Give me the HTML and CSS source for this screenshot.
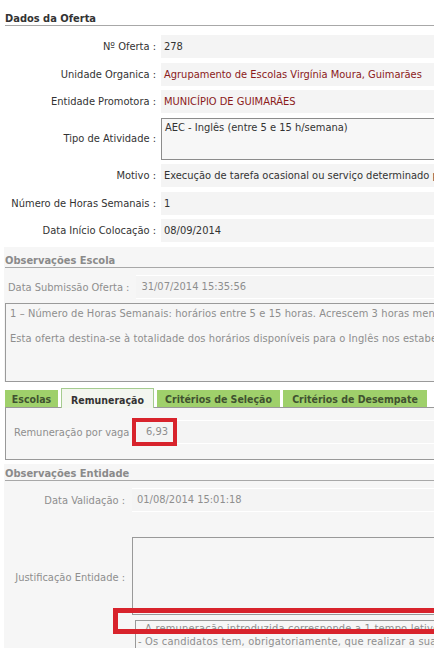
FILE: index.html
```html
<!DOCTYPE html>
<html lang="pt">
<head>
    <meta charset="UTF-8">
    <meta name="viewport" content="width=device-width, initial-scale=1.0">
    <link rel="stylesheet" href="styles.css">
    <title>Dados da Oferta</title>
</head>
<body>
    <div class="page">
        <h2 class="section-title">Dados da Oferta</h2>

        <div class="form-row">
            <label>Nº Oferta :</label>
            <div class="value">278</div>
        </div>
        <div class="form-row">
            <label>Unidade Organica :</label>
            <div class="value red">Agrupamento de Escolas Virgínia Moura, Guimarães</div>
        </div>
        <div class="form-row">
            <label>Entidade Promotora :</label>
            <div class="value red">MUNICÍPIO DE GUIMARÃES</div>
        </div>
        <div class="form-row">
            <label>Tipo de Atividade :</label>
            <div class="value box">AEC - Inglês (entre 5 e 15 h/semana)</div>
        </div>
        <div class="form-row">
            <label>Motivo :</label>
            <div class="value">Execução de tarefa ocasional ou serviço determinado p</div>
        </div>
        <div class="form-row">
            <label>Número de Horas Semanais :</label>
            <div class="value">1</div>
        </div>
        <div class="form-row last">
            <label>Data Início Colocação :</label>
            <div class="value">08/09/2014</div>
        </div>

        <div class="disabled-area">
            <h2 class="section-title muted">Observações Escola</h2>

            <div class="inline-row">
                <label>Data Submissão Oferta :</label>
                <div class="input">31/07/2014 15:35:56</div>
            </div>

            <div class="textarea">
                <p>1 – Número de Horas Semanais: horários entre 5 e 15 horas. Acrescem 3 horas men</p>
                <p>Esta oferta destina-se à totalidade dos horários disponíveis para o Inglês nos estabel</p>
            </div>

            <div class="tab-block">
                <div class="tabs">
                    <div class="tab tab-escolas">Escolas</div>
                    <div class="tab tab-remun active">Remuneração</div>
                    <div class="tab tab-selecao">Critérios de Seleção</div>
                    <div class="tab tab-desempate">Critérios de Desempate</div>
                </div>
                <div class="tab-panel">
                    <div class="pay-row">
                        <span class="pay-label">Remuneração por vaga</span>
                        <div class="input pay-value">
                            6,93
                            <span class="mark mark-pay"></span>
                        </div>
                    </div>
                </div>
            </div>

            <h2 class="section-title muted">Observações Entidade</h2>

            <div class="side-row">
                <label>Data Validação :</label>
                <div class="input">01/08/2014 15:01:18</div>
            </div>

            <div class="side-row tall">
                <label>Justificação Entidade :</label>
                <div class="just">
                    <div class="just-empty"></div>
                    <div class="just-text">
                        <p>- A remuneração introduzida corresponde a 1 tempo letivo.</p>
                        <p>- Os candidatos tem, obrigatoriamente, que realizar a sua a</p>
                    </div>
                    <span class="mark mark-just"></span>
                </div>
            </div>
        </div>
    </div>
</body>
</html>
```

FILE: styles.css
```css
body {
    margin: 0;
    font-family: "DejaVu Sans Condensed", "DejaVu Sans", sans-serif;
    font-size: 11px;
    color: #333;
    background: #fff;
    overflow: hidden;
}

.page {
    padding-top: 13px;
}

.section-title {
    margin: 0 0 9px 5px;
    padding: 0;
    font-size: 11px;
    font-weight: bold;
    color: #333;
    border-bottom: 1px solid #a8a8a8;
    line-height: 12px;
}

.section-title.muted {
    margin-bottom: 7px;
    color: #8a8a8a;
}

.form-row {
    display: grid;
    grid-template-columns: 156px 1fr;
    column-gap: 5px;
    align-items: center;
    margin-bottom: 4.5px;
}

.form-row.last {
    margin-bottom: 5px;
}

.form-row label {
    text-align: right;
}

.value {
    background: #f4f4f4;
    height: 23px;
    line-height: 23px;
    padding-left: 3px;
    white-space: nowrap;
    overflow: hidden;
}

.value.red {
    color: #8b1a1a;
}

.value.box {
    box-sizing: border-box;
    height: 42px;
    line-height: 14px;
    padding-top: 2px;
    border: 1px solid #8c8c8c;
    border-right: none;
    background: #f7f7f7;
}

.disabled-area {
    margin-left: 4px;
    padding-top: 8px;
    background: #f6f6f6;
    color: #8e8e8e;
}

.disabled-area .section-title {
    margin-left: 1px;
}

.inline-row {
    display: flex;
    align-items: center;
    gap: 7px;
    padding-left: 4px;
    margin-bottom: 4px;
}

.input {
    flex: 1;
    position: relative;
    height: 22px;
    line-height: 22px;
    padding-left: 5px;
    background: #f4f4f4;
    border-top: 1px solid #fff;
    border-bottom: 1px solid #fff;
    white-space: nowrap;
}

.textarea {
    box-sizing: border-box;
    margin-left: 1px;
    height: 79px;
    border: 1px solid #9a9a9a;
    border-right: none;
    padding: 3px 4px;
    white-space: nowrap;
    overflow: hidden;
    letter-spacing: 0.1px;
}

.textarea p {
    margin: 0 0 11px;
    line-height: 14px;
}

.tab-block {
    margin-left: -4px;
    padding: 6px 0 4px 5px;
    background: #fff;
}

.tabs {
    display: flex;
    gap: 3px;
    height: 19px;
    align-items: flex-end;
    font-size: 10.5px;
}

.tab {
    height: 17px;
    line-height: 18px;
    background: #9fd06b;
    color: #3f5230;
    font-weight: bold;
    text-align: center;
    white-space: nowrap;
    box-sizing: border-box;
}

.tab-escolas {
    width: 53px;
}

.tab-remun {
    width: 93px;
}

.tab-selecao {
    width: 123px;
}

.tab-desempate {
    width: 144px;
}

.tab.active {
    height: 20px;
    margin-bottom: -1px;
    background: #f3f6ef;
    border: 1px solid #a5cc8f;
    border-bottom: none;
    color: #333;
    position: relative;
    z-index: 1;
    line-height: 22px;
}

.tab-panel {
    height: 53px;
    border: 1px solid #999;
    border-right: none;
    box-sizing: border-box;
    padding-top: 12px;
    background: #f6f6f6;
    color: #8e8e8e;
}

.pay-row {
    display: grid;
    grid-template-columns: 123px 1fr;
    align-items: center;
    padding-left: 8px;
}

.pay-value {
    padding-left: 9px;
}

.mark {
    position: absolute;
    border: 4px solid #d8232c;
    box-sizing: border-box;
}

.mark-pay {
    left: -5px;
    top: -3px;
    width: 45px;
    height: 28px;
}

.tab-block + .section-title {
    margin-top: 4px;
}

.side-row {
    display: grid;
    grid-template-columns: 121px 1fr;
    column-gap: 7px;
    align-items: center;
}

.side-row label {
    text-align: right;
}

.side-row.tall {
    margin-top: 25px;
    align-items: start;
}

.side-row.tall label {
    padding-top: 34px;
}

.just {
    position: relative;
}

.just-empty {
    box-sizing: border-box;
    height: 78px;
    border: 1px solid #999;
    border-right: none;
}

.just-text {
    margin-top: 5px;
    margin-left: 3px;
    padding: 1px 2px 0;
    border-top: 1px solid #999;
    border-left: 1px solid #999;
    white-space: nowrap;
    overflow: hidden;
    letter-spacing: 0.2px;
}

.just-text p {
    margin: 0;
    line-height: 13px;
}

.mark-just {
    left: -19px;
    top: 71px;
    width: 330px;
    height: 26px;
    border-width: 5px;
}
```
